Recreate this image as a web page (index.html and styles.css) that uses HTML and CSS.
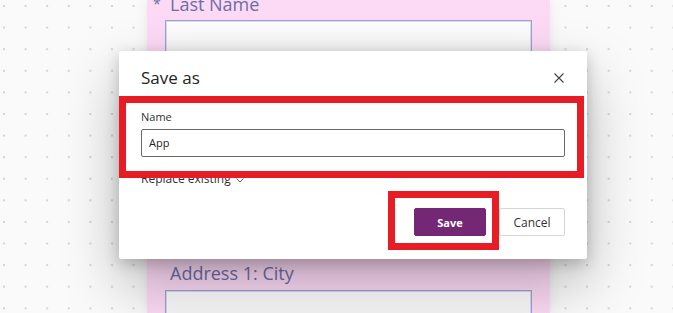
FILE: index.html
```html
<!DOCTYPE html>
<html lang="en">
<head>
<meta charset="utf-8">
<title>Save as</title>
<link rel="stylesheet" href="styles.css">
</head>
<body>
<div class="canvas">
  <div class="form-panel">
    <div class="field field-first">
      <div class="field-label"><span class="req">*</span>Last Name</div>
      <div class="field-input"></div>
    </div>
    <div class="field field-city">
      <div class="field-label">Address 1: City</div>
      <div class="field-input"></div>
    </div>
  </div>

  <div class="dialog" role="dialog" aria-label="Save as">
    <div class="dialog-header">
      <h1 class="dialog-title">Save as</h1>
      <button class="close-btn" aria-label="Close">
        <svg width="10" height="10" viewBox="0 0 10 10"><path d="M0.5 0.5 L9.5 9.5 M9.5 0.5 L0.5 9.5" stroke="#424242" stroke-width="1.1" fill="none"/></svg>
      </button>
    </div>
    <div class="name-field">
      <label class="name-label">Name</label>
      <div class="name-input">App</div>
    </div>
    <div class="replace">Replace existing
      <svg class="chev" width="8" height="5" viewBox="0 0 8 5"><path d="M0.5 0.5 L4 4 L7.5 0.5" stroke="#616161" stroke-width="1" fill="none"/></svg>
    </div>
    <div class="actions">
      <button class="btn btn-primary">Save</button>
      <button class="btn btn-secondary">Cancel</button>
    </div>
    <div class="highlight highlight-name"></div>
    <div class="highlight highlight-save"></div>
  </div>
</div>
</body>
</html>
```
FILE: styles.css
```css
html, body {
  margin: 0;
  padding: 0;
  height: 100%;
  overflow: hidden;
}
body {
  font-family: "Open Sans", "Noto Sans", sans-serif;
  background-color: #fafafa;
  background-image: radial-gradient(circle, #d4d4d4 0.9px, transparent 1.3px);
  background-size: 21.6px 21.6px;
  background-position: -6.8px -4.8px;
}
.canvas {
  position: relative;
  height: 313px;
  overflow: hidden;
}
.form-panel {
  margin-left: 147px;
  width: 403px;
  height: 313px;
  overflow: hidden;
  box-sizing: border-box;
  padding: 0 18px;
  background: #fcdaf5;
  box-shadow: 0 0 12px rgba(0, 0, 0, 0.08);
  display: flex;
  flex-direction: column;
}
.field-label {
  position: relative;
  padding-left: 5px;
  font-size: 18px;
  line-height: 24px;
  color: #6a6ea6;
}
.field-first .field-label {
  margin-top: -8px;
}
.req {
  position: absolute;
  left: -12px;
  top: 0;
  font-size: 14px;
}
.field-input {
  margin-top: 4px;
  height: 36px;
  flex-shrink: 0;
  box-sizing: border-box;
  border: 1px solid #9da1d2;
  box-shadow: inset 0 0 0 1px #d9daf0;
  background: linear-gradient(#ffffff, #f2f2f2);
}
.field-city {
  margin-top: 205px;
}
.field-city .field-input {
  margin-top: 5px;
}

.dialog {
  position: absolute;
  left: 119px;
  top: 51px;
  width: 468px;
  box-sizing: border-box;
  padding: 15px 22px 23px 22px;
  background: #ffffff;
  border-radius: 2px;
  box-shadow: 0 25.6px 57.6px rgba(0, 0, 0, 0.26), 0 4.8px 14.4px rgba(0, 0, 0, 0.2);
  color: #323130;
}
.dialog-header {
  display: flex;
  justify-content: space-between;
  align-items: center;
  height: 24px;
}
.dialog-title {
  margin: 0;
  font-size: 17px;
  line-height: 24px;
  font-weight: 400;
  color: #242424;
}
.close-btn {
  border: 0;
  padding: 0;
  margin-right: 1px;
  background: transparent;
  width: 10px;
  height: 10px;
  display: flex;
}
.name-field {
  margin-top: 19px;
  display: flex;
  flex-direction: column;
}
.name-label {
  font-size: 11px;
  line-height: 16px;
  color: #323130;
}
.name-input {
  margin-top: 4px;
  height: 28px;
  box-sizing: border-box;
  border: 1px solid #6b6a69;
  border-radius: 2px;
  padding: 0 7px;
  font-size: 11px;
  line-height: 26px;
  color: #242424;
}
.replace {
  margin-top: 14px;
  font-size: 12px;
  line-height: 16px;
  color: #323130;
  display: flex;
  align-items: center;
  gap: 5px;
}
.chev {
  margin-top: 2px;
}
.actions {
  margin-top: 21px;
  display: flex;
  justify-content: flex-end;
  gap: 13px;
}
.btn {
  height: 28px;
  box-sizing: border-box;
  border-radius: 2px;
  font-family: "Open Sans", "Noto Sans", sans-serif;
  padding: 0;
}
.btn-primary {
  width: 72px;
  border: 1px solid #742774;
  background: #742774;
  color: #ffffff;
  font-size: 11px;
  font-weight: 700;
}
.btn-secondary {
  width: 66px;
  border: 1px solid #d6d6d6;
  background: #ffffff;
  color: #323130;
  font-size: 12px;
}
.highlight {
  position: absolute;
  box-sizing: border-box;
  border: 7px solid #e81c24;
  pointer-events: none;
}
.highlight-name {
  left: 0;
  top: 45px;
  width: 465px;
  height: 82px;
}
.highlight-save {
  left: 269px;
  top: 140px;
  width: 111px;
  height: 59px;
}
```
